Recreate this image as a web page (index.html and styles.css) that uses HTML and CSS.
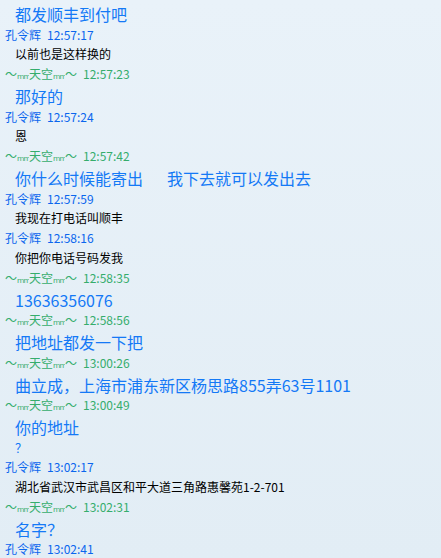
FILE: index.html
```html
<!DOCTYPE html>
<html lang="zh">
<head>
    <meta charset="UTF-8">
    <title>聊天记录</title>
    <link rel="stylesheet" href="styles.css">
</head>
<body>
    <div class="chat">
        <div class="msg big">都发顺丰到付吧</div>
        <div class="meta me"><span class="name">孔令辉</span><span class="time">12:57:17</span></div>
        <div class="msg small">以前也是这样换的</div>
        <div class="meta other"><span class="name">〜<span class="mm">ₘₘ</span>天空<span class="mm">ₘₘ</span>〜</span><span class="time">12:57:23</span></div>
        <div class="msg big">那好的</div>
        <div class="meta me"><span class="name">孔令辉</span><span class="time">12:57:24</span></div>
        <div class="msg small">恩</div>
        <div class="meta other"><span class="name">〜<span class="mm">ₘₘ</span>天空<span class="mm">ₘₘ</span>〜</span><span class="time">12:57:42</span></div>
        <div class="msg big">你什么时候能寄出<span class="gap"></span>我下去就可以发出去</div>
        <div class="meta me"><span class="name">孔令辉</span><span class="time">12:57:59</span></div>
        <div class="msg small">我现在打电话叫顺丰</div>
        <div class="meta me"><span class="name">孔令辉</span><span class="time">12:58:16</span></div>
        <div class="msg small">你把你电话号码发我</div>
        <div class="meta other"><span class="name">〜<span class="mm">ₘₘ</span>天空<span class="mm">ₘₘ</span>〜</span><span class="time">12:58:35</span></div>
        <div class="msg big">13636356076</div>
        <div class="meta other"><span class="name">〜<span class="mm">ₘₘ</span>天空<span class="mm">ₘₘ</span>〜</span><span class="time">12:58:56</span></div>
        <div class="msg big">把地址都发一下把</div>
        <div class="meta other"><span class="name">〜<span class="mm">ₘₘ</span>天空<span class="mm">ₘₘ</span>〜</span><span class="time">13:00:26</span></div>
        <div class="msg big">曲立成，上海市浦东新区杨思路855弄63号1101</div>
        <div class="meta other"><span class="name">〜<span class="mm">ₘₘ</span>天空<span class="mm">ₘₘ</span>〜</span><span class="time">13:00:49</span></div>
        <div class="msg big">你的地址</div>
        <div class="msg ask">？</div>
        <div class="meta me"><span class="name">孔令辉</span><span class="time">13:02:17</span></div>
        <div class="msg small">湖北省武汉市武昌区和平大道三角路惠馨苑1-2-701</div>
        <div class="meta other"><span class="name">〜<span class="mm">ₘₘ</span>天空<span class="mm">ₘₘ</span>〜</span><span class="time">13:02:31</span></div>
        <div class="msg big">名字？</div>
        <div class="meta me"><span class="name">孔令辉</span><span class="time">13:02:41</span></div>
    </div>
</body>
</html>
```

FILE: styles.css
```css
html, body {
    height: 100%;
}
body {
    margin: 0;
    font-family: "Noto Sans CJK SC", "DejaVu Sans", sans-serif;
    background: linear-gradient(to bottom, #e9f2f9, #e2edf5);
    overflow: hidden;
}
.chat {
    padding: 1.5px 0 0 5px;
}
.meta {
    font-size: 12px;
    line-height: 19.5px;
    height: 19.5px;
    white-space: nowrap;
}
.meta .name {
    margin-right: 6px;
}
.meta.me {
    color: #0a66ee;
}
.meta.other {
    color: #35ad6c;
}
.mm {
    display: inline-block;
    width: 12px;
    overflow: hidden;
    letter-spacing: -1px;
    vertical-align: top;
}
.msg {
    padding-left: 10px;
    white-space: nowrap;
}
.msg.big {
    font-size: 16px;
    color: #1479f6;
    line-height: 20.5px;
    padding-top: 2.5px;
}
.msg.small {
    font-size: 12px;
    color: #000;
    line-height: 20px;
}
.msg.ask {
    font-size: 12px;
    color: #1479f6;
    line-height: 19.5px;
}
.gap {
    display: inline-block;
    width: 24px;
}
```
